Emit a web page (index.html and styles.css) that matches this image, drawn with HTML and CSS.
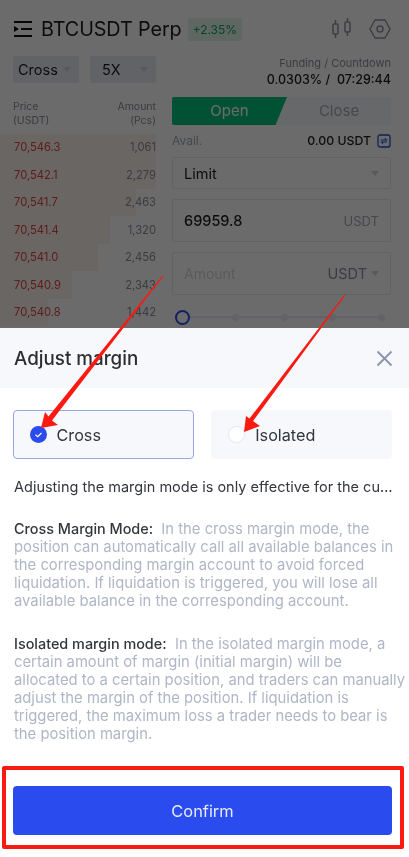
FILE: index.html
```html
<!DOCTYPE html>
<html lang="en">
<head>
<meta charset="utf-8">
<title>Adjust margin</title>
<link rel="stylesheet" href="styles.css">
</head>
<body>
<div class="page">
  <section class="trade">
    <header class="topbar">
      <svg class="menu-icon" width="20" height="20" viewBox="0 0 20 20"><path d="M1 3h18M8 10h11M1 17h18" stroke="#111" stroke-width="2" fill="none"/><path d="M1 7l5 3-5 3z" fill="#111"/></svg>
      <h1 class="pair">BTCUSDT Perp</h1>
      <span class="change">+2.35%</span>
      <span class="spacer"></span>
      <svg class="candle-icon" width="22" height="24" viewBox="0 0 22 24"><g fill="none" stroke="#8f95a3" stroke-width="1.5"><rect x="2" y="7" width="5" height="10" rx="1"/><path d="M4.5 3v4M4.5 17v4"/><rect x="14" y="5" width="5" height="10" rx="1"/><path d="M16.500 1v4M16.500 15v4"/></g></svg>
      <svg class="gear-icon" width="22" height="22" viewBox="0 0 22 22"><g fill="none" stroke="#8f95a3" stroke-width="1.5"><path d="M6 2h10l5 9-5 9H6l-5-9z" stroke-linejoin="round"/><circle cx="11" cy="11" r="3"/></g></svg>
    </header>
    <div class="controls">
      <div class="selects">
        <span class="select">Cross<i class="caret"></i></span>
        <span class="select">5X<i class="caret"></i></span>
      </div>
      <div class="funding">
        <div class="funding-label">Funding / Countdown</div>
        <div class="funding-value">0.0303% / &nbsp;07:29:44</div>
      </div>
    </div>
    <div class="columns">
      <div class="book">
        <div class="book-head"><span>Price<br>(USDT)</span><span class="right">Amount<br>(Pcs)</span></div>
        <div class="book-row"><i class="depth" style="width:156px"></i><span class="price">70,546.3</span><span class="qty">1,061</span></div>
        <div class="book-row"><i class="depth" style="width:156px"></i><span class="price">70,542.1</span><span class="qty">2,279</span></div>
        <div class="book-row"><i class="depth" style="width:136px"></i><span class="price">70,541.7</span><span class="qty">2,463</span></div>
        <div class="book-row"><i class="depth" style="width:110px"></i><span class="price">70,541.4</span><span class="qty">1,320</span></div>
        <div class="book-row"><i class="depth" style="width:98px"></i><span class="price">70,541.0</span><span class="qty">2,456</span></div>
        <div class="book-row"><i class="depth" style="width:72px"></i><span class="price">70,540.9</span><span class="qty">2,343</span></div>
        <div class="book-row"><i class="depth" style="width:48px"></i><span class="price">70,540.8</span><span class="qty">1,442</span></div>
      </div>
      <div class="order">
        <div class="tabs"><span class="tab-open">Open</span><span class="tab-close">Close</span></div>
        <div class="avail">
          <span class="avail-label">Avail.</span>
          <span class="avail-value">0.00 USDT</span>
          <svg width="14" height="14" viewBox="0 0 14 14"><rect x="1" y="1" width="12" height="12" rx="2" fill="none" stroke="#2a4cd0" stroke-width="1.300"/><path d="M4 6h5.500L8 4.300M10 8H4.500L6 9.700" fill="none" stroke="#2a4cd0" stroke-width="1.100"/></svg>
        </div>
        <div class="field field-limit"><span class="field-text">Limit</span><i class="caret"></i></div>
        <div class="field field-tall"><span class="field-text big">69959.8</span><span class="unit">USDT</span></div>
        <div class="field field-tall"><span class="placeholder">Amount</span><span class="unit strong">USDT</span><i class="caret"></i></div>
        <div class="slider"><span class="knob"></span><span class="dot"></span><span class="dot"></span><span class="dot"></span><span class="dot"></span></div>
      </div>
    </div>
  </section>

  <section class="sheet">
    <div class="sheet-head">
      <h2 class="sheet-title">Adjust margin</h2>
      <svg width="17" height="17" viewBox="0 0 17 17"><path d="M1.500 1.500l14 14M15.500 1.500l-14 14" stroke="#8b93ab" stroke-width="1.800" fill="none"/></svg>
    </div>
    <div class="modes">
      <div class="mode mode-active">
        <svg class="radio" width="17" height="17" viewBox="0 0 17 17"><circle cx="8.500" cy="8.500" r="8.500" fill="#2a4cee"/><path d="M5.500 8.700l2.200 2 3.800-3.700" fill="none" stroke="#fff" stroke-width="1.200"/></svg>
        <span>Cross</span>
      </div>
      <div class="mode">
        <span class="radio-empty"></span>
        <span>Isolated</span>
      </div>
    </div>
    <p class="notice">Adjusting the margin mode is only effective for the current contract.</p>
    <p class="desc"><b>Cross Margin Mode:</b>&nbsp; In the cross margin mode, the position can automatically call all available balances in the corresponding margin account to avoid forced liquidation. If liquidation is triggered, you will lose all available balance in the corresponding account.</p>
    <p class="desc desc-second"><b>Isolated margin mode:</b>&nbsp; In the isolated margin mode, a certain amount of margin (initial margin) will be<br>allocated to a certain position, and traders can manually<br>adjust the margin of the position. If liquidation is<br>triggered, the maximum loss a trader needs to bear is<br>the position margin.</p>
    <div class="actions"><button class="confirm">Confirm</button></div>
  </section>

  <svg class="arrows" width="409" height="857" viewBox="0 0 409 857">
    <path d="M163.500 276L52 420.500 58 425 41 428 45 412 48.500 416.500 162.500 275.500z" fill="#fb1a12"/>
    <path d="M345.500 295L253 421 260 426 244 432 246 416 249.500 418.500 344.500 294.500z" fill="#fb1a12"/>
  </svg>
  <div class="highlight"></div>
</div>
</body>
</html>
```
FILE: styles.css
```css
* { box-sizing: border-box; }
html, body { margin: 0; padding: 0; overflow: hidden; }
body { font-family: Inter, "Noto Sans", "Liberation Sans", sans-serif; color: #1b1d22; background: #fff; }
.page { position: relative; width: 409px; height: 857px; display: flex; flex-direction: column; overflow: hidden; }
h1, h2, p { margin: 0; font-weight: 400; }

/* dimmed trading screen */
.trade { position: relative; height: 328px; flex: none; padding: 17px 18px 0 13px; background: #fff; overflow: hidden; filter: blur(.5px); }
.trade::after { content: ""; position: absolute; inset: 0; background: rgba(0,0,0,.58); }

.topbar { display: flex; align-items: center; height: 24px; }
.menu-icon { margin-right: 8px; flex: none; }
.pair { font-size: 19.800px; letter-spacing: -.1px; white-space: nowrap; }
.change { margin-left: 6px; padding: 0 5px; height: 23px; line-height: 23px; font-size: 12px; color: #0e9f6e; background: #dff5ea; border-radius: 2px; }
.spacer { flex: 1; }
.candle-icon { margin-right: 16px; }

.controls { display: flex; justify-content: space-between; margin-top: 15px; height: 28px; }
.selects { display: flex; gap: 11px; }
.select { display: flex; align-items: center; justify-content: space-between; width: 66px; height: 27px; padding: 0 8px 0 5px; font-size: 14.500px; background: #e8edf3; border-radius: 2px; }
.select + .select { padding-left: 12px; }
.caret { display: block; width: 0; height: 0; border: 4px solid transparent; border-top: 5px solid #cfd4dc; border-bottom: 0; }
.funding { text-align: right; }
.funding-label { font-size: 11px; line-height: 14px; color: #8a8f9b; }
.funding-value { font-size: 12.500px; line-height: 17px; font-weight: 500; margin-top: 1px; }

.columns { display: flex; gap: 16px; margin-top: 13px; }
.book { width: 143px; flex: none; }
.book-head { display: flex; justify-content: space-between; height: 36.500px; padding-top: 3px; font-size: 10.500px; line-height: 13.500px; color: #8a8f9b; }
.right { text-align: right; }
.book-row { position: relative; display: flex; justify-content: space-between; align-items: center; height: 27.500px; font-size: 11.200px; }
.depth { position: absolute; left: -13px; top: 0; bottom: 0; background: #fdf3ef; }
.price { position: relative; margin-left: 1px; color: #e0463e; }
.qty { position: relative; color: #8a8f9b; }

.order { flex: 1; }
.tabs { position: relative; display: flex; height: 28px; background: #f5f7fa; font-size: 15px; line-height: 28px; color: #a6abb6; }
.tab-open { width: 115px; color: #fff; text-align: center; background: #04c27e; clip-path: polygon(0 0, 100% 0, 90% 100%, 0 100%); border-radius: 2px 0 0 2px; }
.tab-close { flex: 1; text-align: center; }
.avail { display: flex; align-items: center; height: 31px; font-size: 12.300px; gap: 6px; margin-bottom: 1px; }
.avail-label { flex: 1; color: #a6abb6; font-size: 12px; }
.avail-value { font-weight: 500; }
.field { display: flex; align-items: center; justify-content: space-between; border: 1px solid #e8eaef; border-radius: 2px; padding: 0 11px; margin-bottom: 10px; }
.field-limit { height: 32px; }
.field-tall { height: 43px; }
.field-text { font-size: 14.500px; }
.field-text.big { font-weight: 500; }
.unit { font-size: 13px; color: #a6abb6; }
.placeholder { flex: 1; font-size: 14px; color: #d5d8df; }
.unit.strong { font-size: 14.500px; color: #8a8f9b; margin-right: 4px; }
.slider { display: flex; justify-content: space-between; align-items: center; position: relative; height: 16px; margin-top: 14px; padding: 0 6px 0 3px; }
.slider::before { content: ""; position: absolute; left: 10px; right: 8px; top: 7px; height: 2px; background: #e6ecf2; }
.knob { position: relative; width: 15px; height: 15px; border: 2.500px solid #2a4cee; border-radius: 50%; background: #fff; }
.dot { position: relative; width: 7px; height: 7px; border-radius: 50%; background: #e6ecf2; }

/* bottom sheet */
.sheet { flex: 1; background: #fff; padding-bottom: 22px; display: flex; flex-direction: column; filter: blur(.35px); }
.sheet-head { display: flex; justify-content: space-between; align-items: center; height: 60px; padding: 0 16px 0 14px; background: #f7f8fb; }
.sheet-title { font-size: 18.800px; font-weight: 500; color: #2b2d33; }
.modes { display: flex; gap: 17px; margin: 22px 17px 0 13px; }
.mode { display: flex; align-items: center; flex: 1; height: 49px; padding-left: 17px; gap: 10px; background: #f7f8fb; border-radius: 4px; font-size: 16.200px; color: #33363d; }
.mode-active { border: 1.500px solid #97aae6; padding-left: 15.500px; }
.radio { flex: none; }
.radio-empty { width: 17px; height: 17px; border-radius: 50%; background: #fff; border: 1px solid #e5e7ee; }
.notice { margin: 18px 14px 0 14px; font-size: 14.500px; line-height: 20px; color: #33363d; white-space: nowrap; overflow: hidden; text-overflow: ellipsis; }
.desc { margin: 23px 14px 0 14px; font-size: 14.800px; line-height: 18px; color: #b0b6c6; }
.desc b { font-size: 14.400px; font-weight: 500; color: #33363d; }
.desc-second { margin-top: 25px; margin-right: 0; }
.actions { margin-top: auto; padding: 0 17px 0 13px; }
.confirm { display: block; width: 100%; height: 49px; border: 0; border-radius: 4px; background: #2a4cee; color: #e6ebff; font: 400 16.400px Inter, "Noto Sans", sans-serif; }

/* annotations lying over the screenshot */
.arrows { position: absolute; left: 0; top: 0; pointer-events: none; }
.highlight { position: absolute; left: 2px; top: 766px; width: 402px; height: 83px; border: 4px solid #fb1a12; border-radius: 2px; pointer-events: none; }
```
